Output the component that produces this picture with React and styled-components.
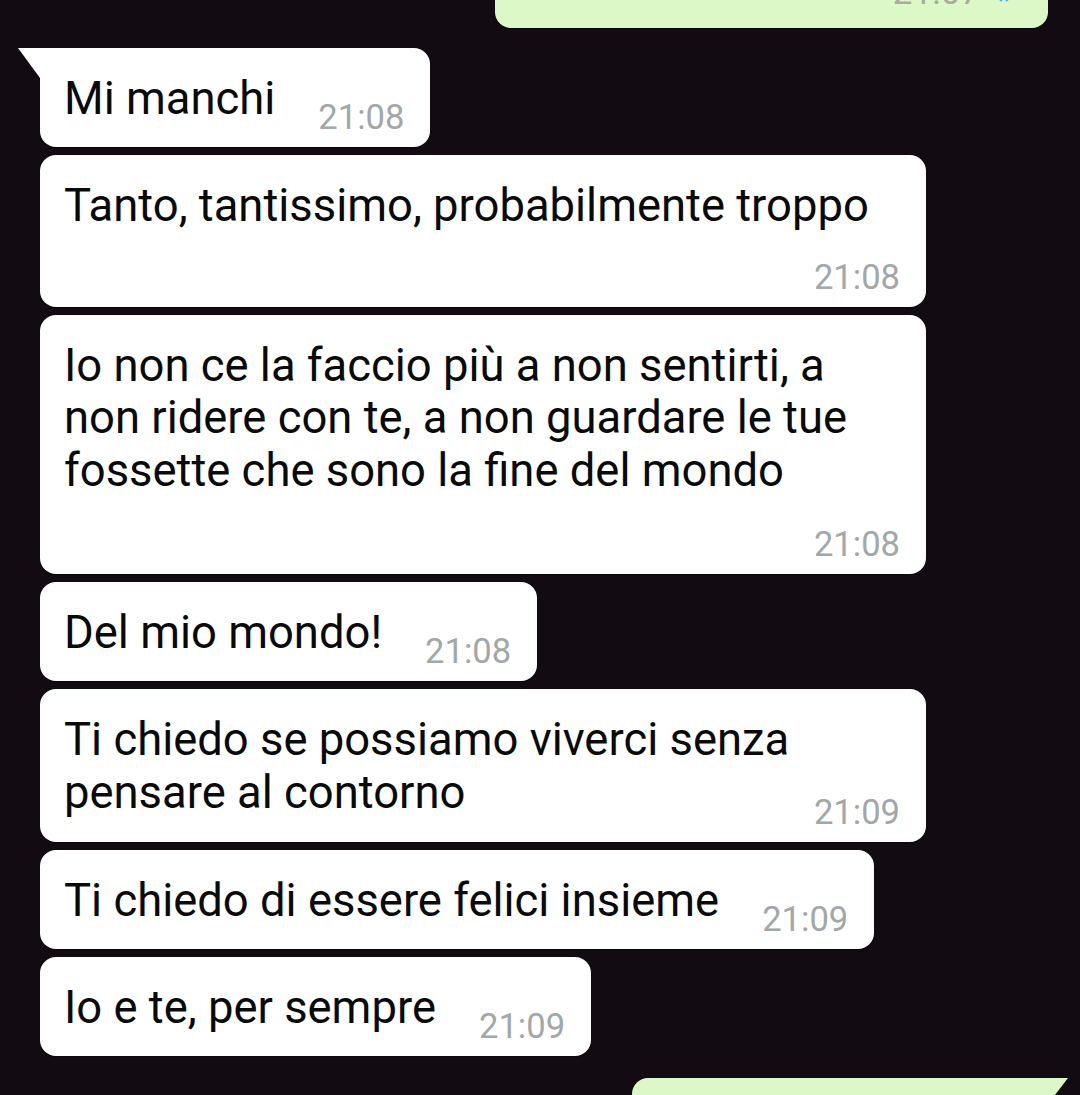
import React from 'react'
import styled, { createGlobalStyle } from 'styled-components'

const messages = [
    { text: 'Mi manchi', time: '21:08', meta: 'inline', tail: true },
    { text: 'Tanto, tantissimo, probabilmente troppo', time: '21:08', meta: 'below', gap: 24 },
    { text: 'Io non ce la faccio più a non sentirti, a non ridere con te, a non guardare le tue fossette che sono la fine del mondo', time: '21:08', meta: 'below', gap: 27 },
    { text: 'Del mio mondo!', time: '21:08', meta: 'inline' },
    { text: 'Ti chiedo se possiamo viverci senza pensare al contorno', time: '21:09', meta: 'below', gap: -27 },
    { text: 'Ti chiedo di essere felici insieme', time: '21:09', meta: 'inline' },
    { text: 'Io e te, per sempre', time: '21:09', meta: 'inline' },
]

const App = () => {
    return (
        <>
            <GlobalStyle />
            <Screen>
                <Outgoing $top>
                    <OutMeta>
                        <span>21:07</span>
                        <Ticks viewBox="0 0 24 16">
                            <path d="M1 8l5 5L15 3M9 11l2 2 10-10" fill="none" stroke="#34b7f1" strokeWidth="2.4" />
                        </Ticks>
                    </OutMeta>
                </Outgoing>
                <Thread>
                    {messages.map((m, i) => (
                        <Bubble key={i} $meta={m.meta} $tail={m.tail}>
                            <Text>{m.text}</Text>
                            <Time $meta={m.meta} $gap={m.gap}>{m.time}</Time>
                        </Bubble>
                    ))}
                </Thread>
                <Outgoing $tail />
            </Screen>
        </>
    )
}

const GlobalStyle = createGlobalStyle`
    html, body {
        margin: 0;
        padding: 0;
        background: #120b12;
    }
    body {
        font-family: Roboto, "Noto Sans", sans-serif;
    }
`;

// Screen
const Screen = styled.div`
    width: 1080px;
    height: 1095px;
    overflow: hidden;
    background: #120b12;
    display: flex;
    flex-direction: column;

    & > * {
        flex-shrink: 0;
    }
`;

// Outgoing (green) bubbles cut by the screen edges
const Outgoing = styled.div`
    position: relative;
    align-self: flex-end;
    margin-right: 32px;
    background: #dcf8c6;
    box-shadow: 0 1px 1px rgba(0, 0, 0, 0.5);
    width: ${p => (p.$top ? '553px' : '416px')};
    height: ${p => (p.$top ? '80px' : '60px')};
    margin-top: ${p => (p.$top ? '-52px' : '22px')};
    border-radius: ${p => (p.$top ? '16px' : '16px 0 16px 16px')};
    display: flex;
    justify-content: flex-end;
    align-items: flex-end;

    ${p => p.$tail && `
        &::after {
            content: '';
            position: absolute;
            top: 0;
            right: -20px;
            width: 20px;
            height: 26px;
            background: #dcf8c6;
            clip-path: polygon(0 0, 100% 0, 0 100%);
        }
    `}
`;

const OutMeta = styled.div`
    display: flex;
    align-items: baseline;
    gap: 14px;
    padding: 0 26px 15px 0;
    font-size: 35px;
    color: #a8ae9f;
    line-height: 40px;
`;

const Ticks = styled.svg`
    width: 28px;
    height: 20px;
`;

// Incoming thread
const Thread = styled.div`
    display: flex;
    flex-direction: column;
    align-items: flex-start;
    gap: 8px;
    padding: 20px 0 0 40px;
`;

const Bubble = styled.div`
    position: relative;
    box-sizing: border-box;
    max-width: 886px;
    width: ${p => (p.$meta === 'inline' ? 'auto' : '886px')};
    background: #ffffff;
    border-radius: ${p => (p.$tail ? '0 16px 16px 16px' : '16px')};
    box-shadow: 0 1px 1px rgba(0, 0, 0, 0.45);
    padding: 25px 26px 10px 24px;
    display: flex;
    flex-direction: ${p => (p.$meta === 'inline' ? 'row' : 'column')};
    column-gap: 43px;

    ${p => p.$tail && `
        &::before {
            content: '';
            position: absolute;
            top: 0;
            left: -22px;
            width: 22px;
            height: 30px;
            background: #ffffff;
            clip-path: polygon(0 0, 100% 0, 100% 100%);
        }
    `}
`;

const Text = styled.div`
    font-size: 45.4px;
    line-height: 52.5px;
    color: #0a0a0a;
`;

const Time = styled.div`
    font-size: 34.6px;
    line-height: 40px;
    color: #a2a7a8;
    white-space: nowrap;
    align-self: flex-end;
    margin-top: ${p => (p.$meta === 'inline' ? '24px' : `${p.$gap}px`)};
`;

export default App
